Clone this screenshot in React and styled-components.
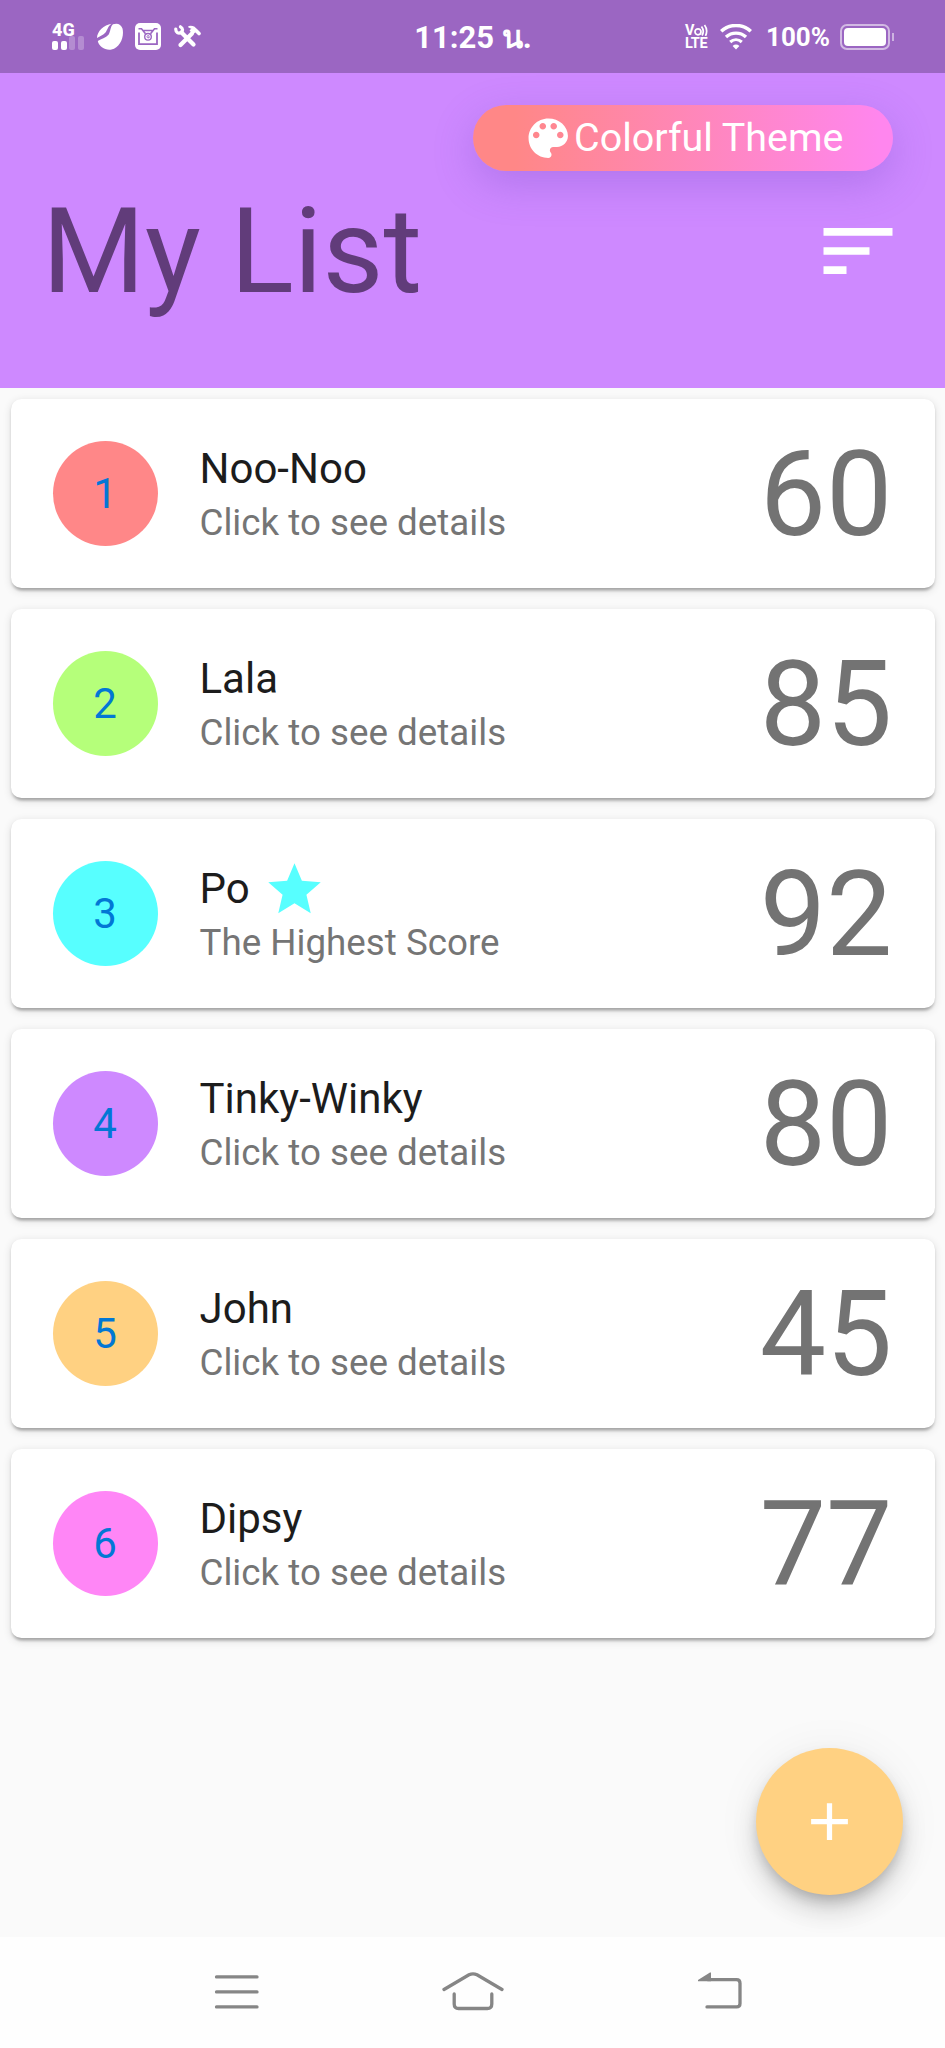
import React from "react";
import styled, { createGlobalStyle } from "styled-components";

const GlobalStyle = createGlobalStyle`
  * { box-sizing: border-box; }
  body { margin: 0; background: #fafafa; font-family: Roboto, "Noto Sans", sans-serif; }
  svg { display: block; flex: none; }
`;

const Screen = styled.div`
  width: 945px;
  height: 2048px;
  display: flex;
  flex-direction: column;
  background: #fafafa;
  position: relative;
  overflow: hidden;
`;

const StatusBar = styled.header`
  height: 73px;
  flex: none;
  display: grid;
  grid-template-columns: 1fr auto 1fr;
  align-items: center;
  padding: 0 51px 0 52px;
  background: #9b66c2;
  color: #fff;
`;

const StatusGroup = styled.div`
  display: flex;
  align-items: center;
  justify-content: ${(p) => (p.$end ? "flex-end" : "flex-start")};
  gap: ${(p) => p.$gap}px;
`;

const Clock = styled.span`
  font-size: 31px;
  font-weight: 700;
  line-height: 40px;
  white-space: nowrap;
  padding-top: 3px;
`;

const Percent = styled.span`
  font-size: 26px;
  font-weight: 700;
  line-height: 32px;
  margin: 1px -1px 0 3px;
`;

const Signal = styled.div`
  width: 32px;
  display: flex;
  flex-direction: column;
`;

const SignalLabel = styled.span`
  font-size: 18px;
  font-weight: 800;
  line-height: 14px;
  height: 13px;
`;

const SignalBars = styled.div`
  display: flex;
  align-items: flex-end;
  gap: 2.5px;
  height: 14px;
`;

const SignalBar = styled.i`
  width: 6px;
  height: ${(p) => p.$h}px;
  border-radius: 2px;
  background: rgba(255, 255, 255, ${(p) => (p.$on ? 1 : 0.25)});
`;

const Volte = styled.div`
  width: 24px;
  height: 26px;
  display: flex;
  flex-direction: column;
  font-size: 14.5px;
  font-weight: 700;
  line-height: 13px;
  letter-spacing: -0.4px;
`;

const VolteTop = styled.span`
  display: flex;
  height: 13px;
`;

const Battery = styled.div`
  display: flex;
  align-items: center;
  gap: 2px;
`;

const BatteryShell = styled.div`
  width: 50px;
  height: 26px;
  padding: 2px;
  border: 2px solid rgba(255, 255, 255, 0.55);
  border-radius: 7px;
`;

const BatteryLevel = styled.div`
  height: 100%;
  border-radius: 4px;
  background: #fff;
`;

const BatteryTip = styled.i`
  width: 2px;
  height: 8px;
  background: rgba(255, 255, 255, 0.5);
`;

const AppHeader = styled.section`
  height: 315px;
  flex: none;
  padding: 32px 52.5px 0 42px;
  background: #ce89ff;
  display: flex;
  flex-direction: column;
`;

const ThemeButton = styled.button`
  align-self: flex-end;
  width: 420px;
  height: 65.6px;
  padding: 0;
  border: 0;
  border-radius: 33px;
  display: flex;
  align-items: center;
  justify-content: center;
  background: linear-gradient(90deg, #ff8787 10%, #ff86ee 97%);
  box-shadow: 0 13px 40px rgba(105, 70, 190, 0.28);
  color: #fff;
  font: 400 39.4px/46px Roboto, sans-serif;
  white-space: nowrap;
`;

const TitleRow = styled.div`
  display: flex;
  justify-content: space-between;
  align-items: center;
  height: 160px;
  margin: 0 -11.5px 0 0;
`;

const Title = styled.h1`
  margin: 0;
  padding-top: 2px;
  font-size: 118.1px;
  font-weight: 400;
  line-height: 138px;
  color: #613c7a;
`;

const List = styled.main`
  flex: 1;
  padding: 10.5px;
  display: flex;
  flex-direction: column;
  gap: 21px;
`;

const Card = styled.article`
  height: 189px;
  padding: 0 42px;
  display: flex;
  align-items: center;
  background: #fff;
  border-radius: 10.5px;
  box-shadow: 0 5px 3px -3px rgba(0, 0, 0, 0.18), 0 2.6px 2.6px rgba(0, 0, 0, 0.12),
    0 2.6px 8px rgba(0, 0, 0, 0.12);
`;

const Avatar = styled.div`
  width: 105px;
  height: 105px;
  flex: none;
  padding-top: 2px;
  border-radius: 50%;
  display: flex;
  align-items: center;
  justify-content: center;
  background: ${(p) => p.$color};
  color: #0277d5;
  font-size: 42px;
  line-height: 50px;
`;

const CardText = styled.div`
  flex: 1;
  padding-top: 4px;
  margin-left: 42px;
`;

const Name = styled.div`
  display: flex;
  align-items: center;
  gap: 13px;
  height: 52px;
  font-size: 42px;
  line-height: 52px;
  color: #1c1c1c;

  svg {
    margin-top: 2px;
  }
`;

const Detail = styled.div`
  margin-top: 3px;
  font-size: 36.75px;
  line-height: 50px;
  color: #757575;
`;

const Score = styled.div`
  padding-top: 3px;
  font-size: 118.1px;
  line-height: 138px;
  color: #737373;
`;

const AddButton = styled.button`
  position: absolute;
  right: 42px;
  bottom: 153px;
  width: 147px;
  height: 147px;
  padding: 0;
  border: 0;
  border-radius: 50%;
  display: flex;
  align-items: center;
  justify-content: center;
  background: #ffd182;
  box-shadow: 0 8px 13px -3px rgba(0, 0, 0, 0.2), 0 16px 26px rgba(0, 0, 0, 0.14),
    0 3px 47px rgba(0, 0, 0, 0.06);
`;

const NavBar = styled.nav`
  height: 111px;
  flex: none;
  display: flex;
  justify-content: center;
  align-items: center;
  gap: 187px;
  padding: 0 0 1px 12px;
  background: #fefefe;
`;

const NavButton = styled.button`
  display: flex;
  justify-content: center;
  padding: 0;
  border: 0;
  background: none;
  margin-left: ${(p) => p.$shift || 0}px;
`;

const people = [
  { name: "Noo-Noo", score: 60, color: "#ff8788" },
  { name: "Lala", score: 85, color: "#b5ff7a" },
  { name: "Po", score: 92, color: "#57ffff", top: true },
  { name: "Tinky-Winky", score: 80, color: "#ce89ff" },
  { name: "John", score: 45, color: "#ffd182" },
  { name: "Dipsy", score: 77, color: "#ff86f6" },
];

const BeanIcon = () => (
  <svg width="26" height="27" viewBox="0 0 26 27" fill="#fff">
    <path d="M14.500.8C7 1.800 0 8.500 0 15c3-2 6.200-3 8.500-5.500C10.500 7 11 3 14.500.8Z" />
    <path d="M16 1.300C20 -.2 24 .8 25.500 5.500C27.500 14 23 24.500 14.500 26.500C8.500 27.600 2 24 .8 18c3.500-2 8-3 10.700-6.200C13.800 8.500 13 4 16 1.300Z" />
  </svg>
);

const MailIcon = () => (
  <svg width="26" height="27" viewBox="0 0 26 27" fill="none">
    <rect width="26" height="27" rx="5" fill="#fff" />
    <g stroke="#9b66c2">
      <path d="M4 9.500v11.700h18V9.500" strokeWidth="1.800" />
      <path d="M3.500 5.800h3l4 5M22.500 5.800h-3l-4 5M7.500 7.500h11" strokeWidth="1.600" />
      <circle cx="13" cy="13.800" r="3.300" strokeWidth="1.400" />
      <path d="M14.500 13.200c-1-1.300-2.800-.6-2.600.8.300 1.200 2.300 1.200 2.600 0H13" strokeWidth=".9" />
    </g>
  </svg>
);

const ToolsIcon = () => (
  <svg width="27" height="23" viewBox="0 0 27 23" fill="none" stroke="#fff" strokeLinecap="round" strokeLinejoin="round">
    <path d="M7.500 7.500 19.500 19.500" strokeWidth="4.200" />
    <path d="M1.800 4C1.500 7.500 4.500 8.800 7 7.500 9.200 6 9 3.200 6.500 1.800" strokeWidth="3.200" />
    <path d="M6.500 20 18 8.500" strokeWidth="4.200" />
    <path d="M15 1.800c4-.6 6 .4 7.500 3.700L19 8 16.500 5.500 18.500 3.500Z" fill="#fff" strokeWidth="1.600" />
    <path d="M22 5.500 25 8.500" strokeWidth="3.600" />
  </svg>
);

const WifiIcon = () => (
  <svg width="32" height="26" viewBox="0 0 32 26" fill="none" stroke="#fff">
    <path d="M1.200 7.300C9.500-.4 22.500-.4 30.800 7.300" strokeWidth="3.600" />
    <path d="M6 13c5.700-5.200 14.300-5.200 20 0" strokeWidth="3.400" />
    <path d="M10.200 18c3.400-3 8.200-3 11.600 0" strokeWidth="3.200" />
    <path d="M12.600 22q3.400-2.800 6.800 0L16 25.500Z" fill="#fff" stroke="none" />
  </svg>
);

const WaveO = () => (
  <svg width="14" height="13" viewBox="0 0 14 13" fill="none" stroke="#fff" strokeWidth="1.700">
    <circle cx="4" cy="7.800" r="3" />
    <path d="M7.500 2.500q3.300 4.500.5 9M10.500 1q3.800 5 1 10.800" />
  </svg>
);

const PaletteIcon = () => (
  <svg width="52.500" height="52.500" viewBox="0 0 24 24" fill="#fff">
    <path d="M12 3c-4.970 0-9 4.030-9 9s4.030 9 9 9c.83 0 1.500-.67 1.500-1.500 0-.39-.15-.74-.39-1.010-.23-.26-.38-.61-.38-.99 0-.83.67-1.500 1.500-1.500H16c2.760 0 5-2.240 5-5 0-4.420-4.030-8-9-8zm-5.500 9c-.83 0-1.500-.67-1.500-1.500S5.670 9 6.500 9 8 9.670 8 10.500 7.330 12 6.500 12zm3-4C8.670 8 8 7.330 8 6.500S8.670 5 9.500 5s1.500.67 1.500 1.500S10.330 8 9.500 8zm5 0c-.83 0-1.500-.67-1.500-1.500S13.670 5 14.500 5s1.500.67 1.500 1.500S15.330 8 14.500 8zm3 4c-.83 0-1.500-.67-1.500-1.500S16.670 9 17.500 9s1.500.67 1.500 1.500-.67 1.500-1.500 1.500z" />
  </svg>
);

const SortIcon = () => (
  <svg width="92" height="92" viewBox="0 0 24 24" fill="#fff">
    <path d="M3 18h6v-2H3v2zM3 6v2h18V6H3zm0 7h12v-2H3v2z" />
  </svg>
);

const StarIcon = () => (
  <svg width="63" height="63" viewBox="0 0 24 24" fill="#57ffff">
    <path d="M12 17.270 18.180 21l-1.640-7.030L22 9.240l-7.190-.61L12 2 9.190 8.630 2 9.240l5.460 4.730L5.820 21z" />
  </svg>
);

const PlusIcon = () => (
  <svg width="63" height="63" viewBox="0 0 24 24" fill="#fff">
    <path d="M19 13h-6v6h-2v-6H5v-2h6V5h2v6h6v2z" />
  </svg>
);

const MenuIcon = () => (
  <svg width="46" height="40" viewBox="0 0 46 40" stroke="#868686" strokeWidth="3.300" strokeLinecap="round">
    <path d="M2.500 4.900h40.500M2.500 19.900h40.500M2.500 34.900h40.500" />
  </svg>
);

const HomeIcon = () => (
  <svg width="64" height="40" viewBox="0 0 64 40" fill="none" stroke="#868686" strokeWidth="3.300" strokeLinecap="round">
    <path d="M3 17.500 28 2.800Q32 .8 36 2.800L61 17.500" />
    <path d="M13.200 22v10q0 4.500 4.500 4.500h28.600q4.500 0 4.500-4.500V22" />
  </svg>
);

const BackIcon = () => (
  <svg width="46" height="40" viewBox="0 0 46 40" fill="none">
    <path d="M10 7.700h28.500q3.500 0 3.500 3.500v20.200q0 3.500-3.500 3.500H9" stroke="#868686" strokeWidth="3.300" strokeLinecap="round" />
    <path d="M0 9.300V8L12 .5h1v8.800Z" fill="#868686" />
  </svg>
);

export default function App() {
  return (
    <Screen>
      <GlobalStyle />
      <StatusBar>
        <StatusGroup $gap={12.5}>
          <Signal>
            <SignalLabel>4G</SignalLabel>
            <SignalBars>
              <SignalBar $on $h={9} />
              <SignalBar $on $h={9} />
              <SignalBar $h={14} />
              <SignalBar $h={14} />
            </SignalBars>
          </Signal>
          <BeanIcon />
          <MailIcon />
          <ToolsIcon />
        </StatusGroup>
        <Clock>11:25 น.</Clock>
        <StatusGroup $end $gap={11}>
          <Volte>
            <VolteTop>V<WaveO /></VolteTop>
            <span>LTE</span>
          </Volte>
          <WifiIcon />
          <Percent>100%</Percent>
          <Battery>
            <BatteryShell>
              <BatteryLevel />
            </BatteryShell>
            <BatteryTip />
          </Battery>
        </StatusGroup>
      </StatusBar>
      <AppHeader>
        <ThemeButton>
          <PaletteIcon />
          Colorful Theme
        </ThemeButton>
        <TitleRow>
          <Title>My List</Title>
          <SortIcon />
        </TitleRow>
      </AppHeader>
      <List>
        {people.map((p, i) => (
          <Card key={p.name}>
            <Avatar $color={p.color}>{i + 1}</Avatar>
            <CardText>
              <Name>
                {p.name}
                {p.top && <StarIcon />}
              </Name>
              <Detail>{p.top ? "The Highest Score" : "Click to see details"}</Detail>
            </CardText>
            <Score>{p.score}</Score>
          </Card>
        ))}
      </List>
      <AddButton aria-label="Add">
        <PlusIcon />
      </AddButton>
      <NavBar>
        <NavButton aria-label="Recent apps">
          <MenuIcon />
        </NavButton>
        <NavButton aria-label="Home" $shift={-5.5}>
          <HomeIcon />
        </NavButton>
        <NavButton aria-label="Back" $shift={5.5}>
          <BackIcon />
        </NavButton>
      </NavBar>
    </Screen>
  );
}
